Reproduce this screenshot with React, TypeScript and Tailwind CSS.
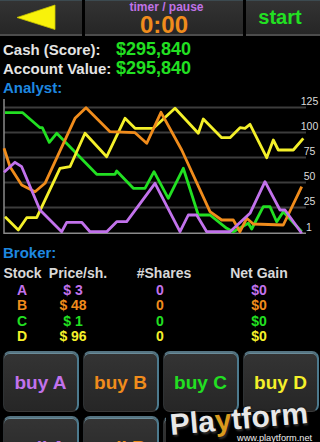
import React from "react";

const PURPLE = "#c272ec";
const ORANGE = "#f08c1c";
const GREEN = "#22e022";
const YELLOW = "#f4f02a";

const green = "5,112.7 22.7,112.7 40,127.7 42.3,127.7 49.3,142.3 56.7,133.3 96.7,174.3 115,174.3 116.7,171 133.3,188.3 145,188.3 154,171.7 168.3,198.3 183.3,168.3 198.3,215 210,215 226.7,228.3 233.3,231.7 248.3,223.3 251.7,229 263.3,206.7 270,206.7 276.7,221.7 283.3,211.7 301.7,231.7";
const yellow = "5,216.7 18.3,230 26.7,217.7 36.7,217.7 60,168.3 70,166.7 85,133.3 106.7,156.7 125,118.3 135,128.3 153.3,128.3 175,108.3 198.3,133.3 203.3,119 221.7,137.7 230,137.7 240,127.7 245,128.3 250,124.3 266.7,157.7 273.3,140 278.3,150 293.3,150 303.3,138.3";
const orange = "4,148.3 10,166.7 21.7,185 35,191.7 45,183.3 75,118.3 86,107.7 110,131.7 135,132.7 146.7,143.3 161,112.3 181.7,150 210,211.7 221.7,220 233.3,220 240,231.7 246.7,218.3 253.3,224 283.3,225 301.7,186.7";
const purple = "4,172.3 15,162.3 21.7,166.7 40,210 61.7,231.7 66.7,222.3 81.7,222.3 90,231.7 106.7,231.7 116.7,221.7 126.7,221.7 155,183.3 180,231.7 188.3,215 196.7,215 206.7,231.7 230,231.7 250,213.3 265,181.7 280,210 285,210 301.7,233.3";

const gridLines = [
  { y: 107.5, label: "125" },
  { y: 132.5, label: "100" },
  { y: 157.5, label: "75" },
  { y: 182.5, label: "50" },
  { y: 207.5, label: "25" },
];

const stocks = [
  { name: "A", price: "$ 3", color: "text-[#c272ec]" },
  { name: "B", price: "$ 48", color: "text-[#f08c1c]" },
  { name: "C", price: "$ 1", color: "text-[#22e022]" },
  { name: "D", price: "$ 96", color: "text-[#f4f02a]" },
];

const TopButton = ({ className, children }: { className: string; children: React.ReactNode }) => (
  <div
    className={`h-[36px] relative flex items-center justify-center bg-linear-to-b from-[#333] to-[#262626] border-b-2 border-b-[#4c4c4c] border-t border-t-[#3c4a50] ${className}`}
  >
    {children}
  </div>
);

const TradeButton = ({ label, color }: { label: string; color: string }) => (
  <div
    className={`w-[76px] h-[61px] shrink-0 flex items-center justify-center pt-[2px] rounded-[7px] bg-linear-to-b from-[#343434] to-[#262626] border-t-2 border-r-2 border-t-[#557482] border-r-[#4d7a8e] border-l border-l-[#2e3234] border-b border-b-[#3a3a3a] shadow-[inset_0_1px_0_#6b8c99] text-[19px] font-bold ${color}`}
  >
    {label}
  </div>
);

export default function App() {
  return (
    <div
      className="w-[320px] h-[442px] bg-black overflow-hidden relative select-none"
      style={{ fontFamily: '"Liberation Sans", Arial, sans-serif' }}
    >
      {/* Top bar */}
      <div className="flex gap-[3px] bg-black">
        <TopButton className="w-[82px]">
          <svg width="82" height="36" viewBox="0 0 82 36">
            <polygon points="17,17.5 55,5 55,29.5" fill="#f8f20a" stroke="#c9c400" strokeWidth="0.8" strokeLinejoin="round" />
          </svg>
        </TopButton>
        <TopButton className="w-[158px] flex-col">
          <div className="absolute left-0 right-0 top-[0px] text-center text-[12px] leading-[13px] font-bold text-[#c072e6] pl-[5px]">
            timer / pause
          </div>
          <div className="absolute left-0 right-0 top-[12px] text-center text-[24px] leading-[24px] font-bold text-[#f08c1c]">
            0:00
          </div>
        </TopButton>
        <TopButton className="flex-1">
          <span className="text-[20px] font-bold text-[#22e022] pr-[6px] pb-[2px]">start</span>
        </TopButton>
      </div>

      {/* Account info */}
      <div className="pt-[4px] pl-[3px]">
        <div className="flex items-baseline h-[19px] leading-[19px]">
          <span className="w-[113px] text-[15px] font-bold text-[#e4e4e4]">Cash (Score):</span>
          <span className="text-[18px] font-bold text-[#22e022]">$295,840</span>
        </div>
        <div className="flex items-baseline h-[19px] leading-[19px]">
          <span className="w-[113px] text-[15px] font-bold text-[#e4e4e4]">Account Value:</span>
          <span className="text-[18px] font-bold text-[#22e022]">$295,840</span>
        </div>
        <div className="h-[19px] leading-[19px] text-[15px] font-bold text-[#1e88e0]">Analyst:</div>
      </div>

      {/* Chart */}
      <svg width="320" height="146" viewBox="0 97 320 146" className="block">
        {gridLines.map((g) => (
          <g key={g.label}>
            <line x1="4" x2="306" y1={g.y} y2={g.y} stroke="#3c3c3c" strokeWidth="2" />
            <text x="309.5" y={g.y - 2.5} textAnchor="middle" fontSize="10.5" fill="#dcdcdc" fontFamily="Liberation Sans, Arial, sans-serif">
              {g.label}
            </text>
          </g>
        ))}
        <text x="309" y="231" textAnchor="middle" fontSize="10.5" fill="#dcdcdc" fontFamily="Liberation Sans, Arial, sans-serif">
          1
        </text>
        <line x1="4" x2="306" y1="233.3" y2="233.3" stroke="#8a8a8a" strokeWidth="1.5" />
        <line x1="4" x2="4" y1="99" y2="234" stroke="#8a8a8a" strokeWidth="1.5" />
        <polyline points={green} fill="none" stroke={GREEN} strokeWidth="2.8" strokeLinejoin="round" />
        <polyline points={yellow} fill="none" stroke={YELLOW} strokeWidth="2.8" strokeLinejoin="round" />
        <polyline points={orange} fill="none" stroke={ORANGE} strokeWidth="2.8" strokeLinejoin="round" />
        <polyline points={purple} fill="none" stroke={PURPLE} strokeWidth="2.8" strokeLinejoin="round" />
      </svg>

      {/* Broker */}
      <div className="pl-[3px] h-[19px] leading-[19px] text-[15px] font-bold text-[#1e88e0]">Broker:</div>
      <div className="mt-[3px] flex h-[16px] leading-[16px] text-[14px] font-bold text-[#d8d8d8]">
        <span className="w-[45px] text-center">Stock</span>
        <span className="w-[66px] text-center">Price/sh.</span>
        <span className="w-[106px] text-center">#Shares</span>
        <span className="w-[84px] text-center">Net Gain</span>
      </div>
      <div className="mt-[2px]">
        {stocks.map((s) => (
          <div key={s.name} className={`flex h-[15.33px] leading-[15px] text-[14px] font-bold ${s.color}`}>
            <span className="w-[44px] text-center">{s.name}</span>
            <span className="w-[58px] text-center">{s.price}</span>
            <span className="w-[116px] text-center">0</span>
            <span className="w-[82px] text-center">$0</span>
          </div>
        ))}
      </div>

      {/* Trade buttons */}
      <div className="pt-[7px] pl-[3px] flex flex-col gap-[4px]">
        <div className="flex gap-[4px]">
          <TradeButton label="buy A" color="text-[#c272ec]" />
          <TradeButton label="buy B" color="text-[#f08c1c]" />
          <TradeButton label="buy C" color="text-[#22e022]" />
          <TradeButton label="buy D" color="text-[#f4f02a]" />
        </div>
        <div className="flex gap-[4px]">
          <TradeButton label="sell A" color="text-[#c272ec]" />
          <TradeButton label="sell B" color="text-[#f08c1c]" />
          <TradeButton label="sell C" color="text-[#22e022]" />
          <TradeButton label="sell D" color="text-[#f4f02a]" />
        </div>
      </div>

      {/* Watermark */}
      <div className="absolute left-[166px] top-[414px] right-0 bottom-0 bg-black" />
      <div className="absolute left-[168px] top-[406px] w-[152px] h-[36px]">
        <div
          className="absolute left-[2px] top-[2px] text-[30px] leading-[34px] font-bold text-[#e8e8e8] -rotate-[5deg] origin-left"
          style={{ textShadow: "0 0 2px #000, 1px 2px 2px #333" }}
        >
          Pla<span className="text-[#d99a1e]">y</span>tform
        </div>
        <div className="absolute left-[69px] top-[27px] text-[9.2px] leading-[10px] text-[#f0f0f0]">
          www.playtform.net
        </div>
      </div>
    </div>
  );
}
